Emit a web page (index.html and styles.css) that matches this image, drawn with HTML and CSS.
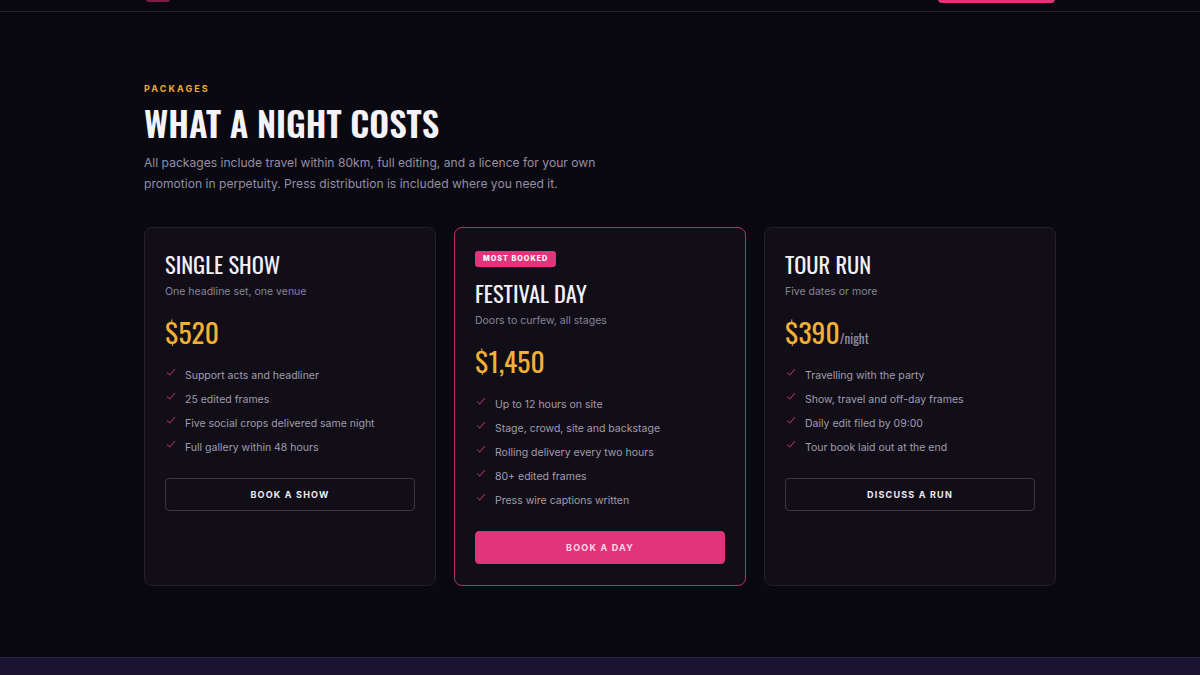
FILE: index.html
```html
<!DOCTYPE html>
<html lang="en">
<head>
    <meta charset="UTF-8">
    <meta name="viewport" content="width=device-width, initial-scale=1.0">
    <title>Packages</title>
    <link rel="stylesheet" href="styles.css">
</head>
<body>
    <header class="site-header">
        <span class="logo-mark"></span>
        <span class="header-cta"></span>
    </header>

    <section class="packages">
        <p class="eyebrow">Packages</p>
        <h1>What a night costs</h1>
        <p class="intro">All packages include travel within 80km, full editing, and a licence for your own promotion in perpetuity. Press distribution is included where you need it.</p>

        <div class="plans">
            <div class="plan">
                <h2>Single show</h2>
                <p class="plan-sub">One headline set, one venue</p>
                <p class="price">$520</p>
                <ul class="features">
                    <li><svg viewBox="0 0 10 8"><polyline points="1,4.5 3.8,7 9,1"/></svg>Support acts and headliner</li>
                    <li><svg viewBox="0 0 10 8"><polyline points="1,4.5 3.8,7 9,1"/></svg>25 edited frames</li>
                    <li><svg viewBox="0 0 10 8"><polyline points="1,4.5 3.8,7 9,1"/></svg>Five social crops delivered same night</li>
                    <li><svg viewBox="0 0 10 8"><polyline points="1,4.5 3.8,7 9,1"/></svg>Full gallery within 48 hours</li>
                </ul>
                <a class="btn" href="#">Book a show</a>
            </div>

            <div class="plan featured">
                <span class="badge">Most booked</span>
                <h2>Festival day</h2>
                <p class="plan-sub">Doors to curfew, all stages</p>
                <p class="price">$1,450</p>
                <ul class="features">
                    <li><svg viewBox="0 0 10 8"><polyline points="1,4.5 3.8,7 9,1"/></svg>Up to 12 hours on site</li>
                    <li><svg viewBox="0 0 10 8"><polyline points="1,4.5 3.8,7 9,1"/></svg>Stage, crowd, site and backstage</li>
                    <li><svg viewBox="0 0 10 8"><polyline points="1,4.5 3.8,7 9,1"/></svg>Rolling delivery every two hours</li>
                    <li><svg viewBox="0 0 10 8"><polyline points="1,4.5 3.8,7 9,1"/></svg>80+ edited frames</li>
                    <li><svg viewBox="0 0 10 8"><polyline points="1,4.5 3.8,7 9,1"/></svg>Press wire captions written</li>
                </ul>
                <a class="btn btn-primary" href="#">Book a day</a>
            </div>

            <div class="plan">
                <h2>Tour run</h2>
                <p class="plan-sub">Five dates or more</p>
                <p class="price">$390<span class="per">/night</span></p>
                <ul class="features">
                    <li><svg viewBox="0 0 10 8"><polyline points="1,4.5 3.8,7 9,1"/></svg>Travelling with the party</li>
                    <li><svg viewBox="0 0 10 8"><polyline points="1,4.5 3.8,7 9,1"/></svg>Show, travel and off-day frames</li>
                    <li><svg viewBox="0 0 10 8"><polyline points="1,4.5 3.8,7 9,1"/></svg>Daily edit filed by 09:00</li>
                    <li><svg viewBox="0 0 10 8"><polyline points="1,4.5 3.8,7 9,1"/></svg>Tour book laid out at the end</li>
                </ul>
                <a class="btn" href="#">Discuss a run</a>
            </div>
        </div>
    </section>

    <section class="next-section"></section>
</body>
</html>
```

FILE: styles.css
```css
body {
    margin: 0;
    background-color: #0a0811;
    color: #ece8f2;
    font-family: 'Inter', 'Liberation Sans', sans-serif;
}

.site-header {
    height: 11px;
    display: flex;
    justify-content: space-between;
    align-items: flex-end;
    padding: 0 145px 0 146px;
    border-bottom: 1px solid #26212e;
    overflow: hidden;
}

.logo-mark {
    width: 24px;
    height: 20px;
    margin-bottom: 9px;
    background-color: #7e1d4a;
    border-radius: 3px;
}

.header-cta {
    width: 117px;
    height: 30px;
    margin-bottom: 8px;
    background-color: #e0357a;
    border-radius: 4px;
}

.packages {
    width: 912px;
    margin: 0 auto;
    padding: 71px 0 71px;
}

.eyebrow {
    margin: 0;
    font-size: 9px;
    font-weight: 700;
    letter-spacing: 2.1px;
    text-transform: uppercase;
    color: #f2aa36;
}

h1, h2, .price {
    font-family: 'Oswald', 'Liberation Sans Narrow', 'DejaVu Sans Condensed', 'Liberation Sans', sans-serif;
}

h1 {
    margin: 8px 0 0;
    font-size: 34.5px;
    line-height: 1.2;
    font-weight: 600;
    text-transform: uppercase;
    color: #f5f2fa;
}

.intro {
    margin: 9px 0 0;
    max-width: 470px;
    font-size: 12.1px;
    line-height: 21px;
    color: #958fa3;
}

.plans {
    display: grid;
    grid-template-columns: repeat(3, 1fr);
    gap: 18px;
    margin-top: 33px;
}

.plan {
    background-color: #110e18;
    border: 1px solid #241f2d;
    border-radius: 8px;
    padding: 23px 20px 21px;
}

.plan.featured {
    border-color: #b5306b;
}

.badge {
    display: block;
    width: fit-content;
    padding: 4px 8px;
    margin-bottom: 13px;
    background-color: #e0357a;
    border-radius: 3px;
    font-size: 7.2px;
    line-height: 8px;
    font-weight: 800;
    letter-spacing: 1px;
    text-transform: uppercase;
    color: #fff;
}

h2 {
    margin: 0;
    font-size: 22.5px;
    line-height: 1.2;
    font-weight: 400;
    text-transform: uppercase;
    color: #f3f0f8;
}

.plan-sub {
    margin: 7px 0 0;
    font-size: 10.5px;
    color: #8a8496;
}

.price {
    margin: 17px 0 0;
    font-size: 27.5px;
    line-height: 1.2;
    font-weight: 400;
    color: #f2b135;
}

.per {
    font-size: 13px;
    color: #958fa3;
}

.features {
    list-style: none;
    margin: 15px 0 0;
    padding: 0;
}

.features li {
    display: flex;
    align-items: center;
    height: 24px;
    font-size: 10.5px;
    color: #a29cad;
}

.features svg {
    width: 10px;
    height: 8px;
    margin: -6px 9px 0 1px;
    fill: none;
    stroke: #8a2552;
    stroke-width: 1.2;
}

.btn {
    display: block;
    margin-top: 19px;
    height: 31px;
    line-height: 31px;
    border: 1px solid #3a3445;
    border-radius: 4px;
    text-align: center;
    text-decoration: none;
    font-size: 9px;
    font-weight: 700;
    letter-spacing: 1.2px;
    text-transform: uppercase;
    color: #efeaf5;
}

.btn-primary {
    background-color: #e0357a;
    border-color: #e0357a;
    color: #ffd6e6;
}

.next-section {
    height: 200px;
    background-color: #1a1332;
    border-top: 1px solid #2d2545;
}
```
